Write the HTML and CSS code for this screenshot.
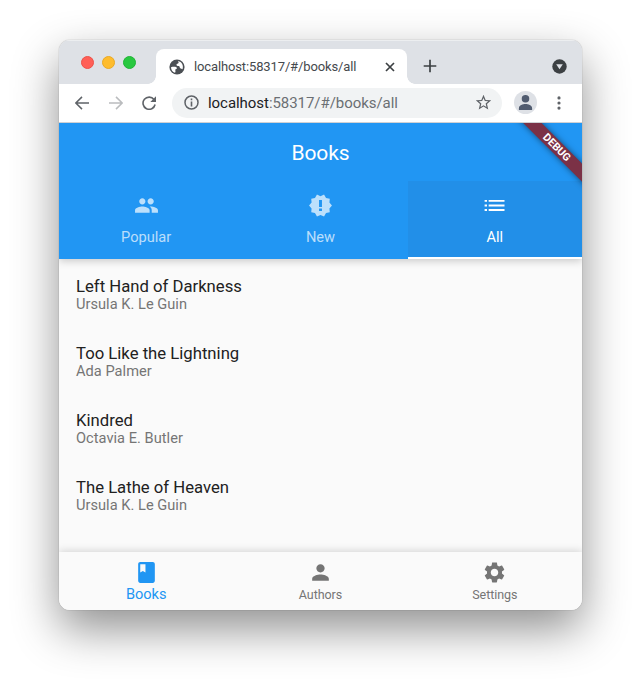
FILE: index.html
```html
<!DOCTYPE html>
<html lang="en">
<head>
<meta charset="utf-8">
<title>Books</title>
<link rel="stylesheet" href="styles.css">
</head>
<body>
<div class="window">
  <header class="tabstrip">
    <div class="lights"><i class="light red"></i><i class="light yellow"></i><i class="light green"></i></div>
    <div class="browser-tab">
      <svg class="globe" width="16" height="16" viewBox="0 0 16 16"><circle cx="8" cy="8" r="7.6" fill="#4b4f54"/><path d="M2 8.2C4 7.7 7.5 7.4 8 9c.3 1.2-1.8.6-1.7 2 .1.9.5 1.6-.3 2.8C3.5 13 2 10.800 2 8.200zM9 2c1.800.400 3.500 1.500 4.300 3.300.7 1.500.8 3.500.200 5-.7-.7-1.500-.4-2.300-1C10.500 8.600 11 7 9.600 7 8.500 7 7.300 6.700 7.500 5.500 7.700 4.500 9 4.800 9.500 4 9.900 3.300 9.200 2.600 9 2z" fill="#fff"/></svg>
      <span class="tab-title">localhost:58317/#/books/all</span>
      <svg class="close" width="10" height="10" viewBox="0 0 10 10"><path d="M1 1l8 8M9 1l-8 8" stroke="#3c4043" stroke-width="1.700"/></svg>
    </div>
    <svg class="plus" width="14" height="14" viewBox="0 0 14 14"><path d="M7 .7v12.600M.7 7h12.600" stroke="#3c4043" stroke-width="1.700"/></svg>
    <svg class="dropdown" width="15" height="15" viewBox="0 0 15 15"><circle cx="7.500" cy="7.500" r="7.200" fill="#3c4043"/><path d="M4.200 5.200h6.600L7.500 10.300z" fill="#dee1e6"/></svg>
  </header>
  <div class="toolbar">
    <svg class="back" width="14" height="14" viewBox="0 0 14 14"><path d="M14 7H1.200M7 .9L.9 7 7 13.100" fill="none" stroke="#5f6368" stroke-width="1.500"/></svg>
    <svg class="forward" width="14" height="14" viewBox="0 0 14 14"><path d="M0 7h12.800M7 .9L13.100 7 7 13.100" fill="none" stroke="#babcbe" stroke-width="1.500"/></svg>
    <svg class="reload" width="14" height="14" viewBox="0 0 14 14"><path d="M12 3.500A6.100 6.100 0 1 0 13.100 8.500" fill="none" stroke="#5f6368" stroke-width="1.600"/><path d="M14 .3V6H8.300z" fill="#5f6368"/></svg>
    <div class="address">
      <svg width="15" height="15" viewBox="0 0 15 15"><circle cx="7.500" cy="7.500" r="6.500" fill="none" stroke="#5f6368" stroke-width="1.500"/><path d="M7.500 3.500v1.700M7.500 6.500v5" stroke="#5f6368" stroke-width="1.600"/></svg>
      <span class="url"><b>localhost</b>:58317/#/books/all</span>
      <svg class="star" width="17" height="17" viewBox="1 1 22 22"><path fill="#5f6368" d="M22 9.240l-7.190-.62L12 2 9.190 8.630 2 9.240l5.460 4.730L5.820 21 12 17.270 18.180 21l-1.630-7.030L22 9.240zM12 15.400l-3.760 2.270 1-4.280-3.320-2.880 4.380-.38L12 6.100l1.710 4.040 4.380.38-3.320 2.880 1 4.280L12 15.400z"/></svg>
    </div>
    <div class="avatar"><svg width="17" height="17" viewBox="3 3 18 18"><path fill="#515c70" d="M12 12a4 4 0 1 0 0-8 4 4 0 0 0 0 8zm0 1.700c-2.670 0-7 1.340-7 4V20h14v-2.300c0-2.660-4.330-4-7-4z"/></svg></div>
    <svg class="more" width="4" height="14" viewBox="0 0 4 14"><path fill="#5f6368" d="M2 .3a1.600 1.600 0 1 1 0 3.200 1.600 1.600 0 0 1 0-3.200zm0 5.100a1.600 1.600 0 1 1 0 3.200 1.600 1.600 0 0 1 0-3.200zm0 5.100a1.600 1.600 0 1 1 0 3.200 1.600 1.600 0 0 1 0-3.200z"/></svg>
  </div>
  <main class="app">
    <header class="appbar">
      <h1>Books</h1>
      <nav class="tabs">
        <div class="tab"><svg viewBox="0 0 24 24"><path d="M16 11c1.660 0 2.990-1.340 2.990-3S17.660 5 16 5s-3 1.340-3 3 1.340 3 3 3zm-8 0c1.660 0 2.990-1.340 2.990-3S9.660 5 8 5 5 6.340 5 8s1.340 3 3 3zm0 2c-2.330 0-7 1.170-7 3.500V19h14v-2.500c0-2.330-4.670-3.500-7-3.500zm8 0c-.29 0-.62.020-.97.050 1.160.84 1.970 1.970 1.970 3.450V19h6v-2.500c0-2.330-4.670-3.500-7-3.500z"/></svg><span>Popular</span></div>
        <div class="tab"><svg viewBox="0 0 24 24"><path d="M23 12l-2.440-2.780.34-3.680-3.610-.82-1.890-3.180L12 3 8.600 1.540 6.710 4.720l-3.610.81.34 3.680L1 12l2.440 2.780-.34 3.690 3.610.82 1.890 3.180L12 21l3.400 1.460 1.890-3.180 3.610-.82-.34-3.680L23 12zm-9.600 5.200h-2.800v-2.300h2.800v2.300zm0-3.800h-2.800V6.600h2.800v6.800z"/></svg><span>New</span></div>
        <div class="tab selected"><svg viewBox="0 0 24 24"><path d="M2.500 6.600h2.300v1.900H2.500zM6.400 6.600h15.200v1.900H6.400zM2.500 11h2.300v1.900H2.500zM6.400 11h15.200v1.900H6.400zM2.500 15.400h2.300v1.900H2.500zM6.400 15.400h15.200v1.900H6.400z"/></svg><span>All</span></div>
      </nav>
    </header>
    <ul class="books">
      <li><h2>Left Hand of Darkness</h2><p>Ursula K. Le Guin</p></li>
      <li><h2>Too Like the Lightning</h2><p>Ada Palmer</p></li>
      <li><h2>Kindred</h2><p>Octavia E. Butler</p></li>
      <li><h2>The Lathe of Heaven</h2><p>Ursula K. Le Guin</p></li>
    </ul>
    <nav class="bottom">
      <div class="dest active"><svg viewBox="0 0 24 24"><path d="M18 2H6c-1.100 0-2 .9-2 2v16c0 1.100.9 2 2 2h12c1.100 0 2-.9 2-2V4c0-1.100-.9-2-2-2zM6 4h5v8l-2.500-1.500L6 12V4z"/></svg><span>Books</span></div>
      <div class="dest"><svg viewBox="0 0 24 24"><path d="M12 12c2.210 0 4-1.790 4-4s-1.790-4-4-4-4 1.790-4 4 1.790 4 4 4zm0 2c-2.670 0-8 1.340-8 4v2h16v-2c0-2.660-5.330-4-8-4z"/></svg><span>Authors</span></div>
      <div class="dest"><svg viewBox="0 0 24 24"><path d="M19.140 12.940c.04-.3.060-.61.060-.94 0-.32-.02-.64-.07-.94l2.030-1.580c.18-.14.23-.41.120-.61l-1.920-3.320c-.12-.22-.37-.29-.59-.22l-2.390.96c-.5-.38-1.030-.7-1.620-.94l-.36-2.540c-.04-.24-.24-.41-.48-.41h-3.840c-.24 0-.43.170-.47.410l-.36 2.540c-.59.240-1.130.57-1.620.94l-2.390-.96c-.22-.08-.47 0-.59.220L2.740 8.870c-.12.210-.08.470.120.610l2.030 1.580c-.05.300-.09.630-.09.940s.02.640.070.940l-2.030 1.580c-.18.140-.23.410-.12.610l1.920 3.320c.12.220.37.290.59.220l2.390-.96c.5.380 1.030.7 1.620.94l.36 2.540c.05.240.24.410.48.410h3.840c.24 0 .44-.17.470-.41l.36-2.540c.59-.24 1.130-.56 1.620-.94l2.390.96c.22.080.47 0 .59-.22l1.920-3.320c.12-.22.070-.47-.12-.61l-2.010-1.580zM12 15.600c-1.980 0-3.600-1.620-3.600-3.600s1.620-3.600 3.600-3.600 3.600 1.620 3.600 3.600-1.620 3.600-3.600 3.600z"/></svg><span>Settings</span></div>
    </nav>
    <div class="ribbon">DEBUG</div>
  </main>
</div>
</body>
</html>
```
FILE: styles.css
```css
* { box-sizing: border-box; margin: 0; padding: 0; }
body { background: #fff; font-family: Roboto, sans-serif; padding: 40px 0 0 59px; height: 687px; overflow: hidden; }
svg { display: block; flex: none; }
.window {
  width: 523px; height: 570px; border-radius: 11px; overflow: hidden;
  display: flex; flex-direction: column; background: #fff;
  box-shadow: 0 0 1px rgba(0,0,0,.5), 0 19px 46px rgba(0,0,0,.44);
}
.tabstrip { height: 44px; background: #dee1e6; display: flex; align-items: flex-end; box-shadow: inset 0 1px 0 #eceef0; flex: none; }
.lights { display: flex; gap: 8px; padding: 0 0 15px 22px; width: 97px; }
.light { width: 13px; height: 13px; border-radius: 50%; }
.red { background: #ff5f57; border: 1px solid #ed5048; }
.yellow { background: #febc2e; border: 1px solid #eaa923; }
.green { background: #28c840; border: 1px solid #20b436; }
.browser-tab {
  position: relative; width: 251px; height: 35px; background: #fff; border-radius: 8px 8px 0 0;
  display: flex; align-items: center; padding: 0 12px 0 13px; color: #45494d; font-size: 13px;
}
.browser-tab::before, .browser-tab::after { content: ""; position: absolute; bottom: 0; width: 8px; height: 8px; }
.browser-tab::before { left: -8px; background: radial-gradient(circle at 0 0, transparent 7.5px, #fff 8px); }
.browser-tab::after { right: -8px; background: radial-gradient(circle at 100% 0, transparent 7.5px, #fff 8px); }
.tab-title { margin-left: 9px; letter-spacing: -.13px; flex: 1; white-space: nowrap; }
.plus { margin: 0 0 11px 16px; }
.dropdown { margin: 0 15px 10px auto; }
.toolbar { height: 39px; flex: none; display: flex; align-items: center; padding: 0 21px 1px 16px; border-bottom: 1px solid #cfd1d4; }
.forward { margin-left: 20px; }
.reload { margin-left: 19px; }
.address { margin-left: 16px; width: 330px; height: 30px; border-radius: 15px; background: #f1f3f4; display: flex; align-items: center; padding: 0 10px 0 12px; }
.url { flex: 1; margin-left: 9px; font-size: 15px; letter-spacing: -.05px; color: #6b6f73; white-space: nowrap; }
.url b { font-weight: 400; color: #202124; }
.avatar { margin-left: 12px; width: 23px; height: 23px; border-radius: 50%; background: #dee1e6; display: flex; align-items: center; justify-content: center; }
.more { margin-left: auto; }
.app { position: relative; flex: 1; min-height: 0; display: flex; flex-direction: column; background: #fafafa; overflow: hidden; }
.appbar { height: 136px; flex: none; background: #2196f3; color: #fff; box-shadow: 0 2px 8px rgba(0,0,0,.2); z-index: 1; }
.appbar h1 { height: 58px; line-height: 61px; font-size: 21px; font-weight: 400; text-align: center; letter-spacing: -.15px; }
.tabs { display: grid; grid-template-columns: repeat(3, 1fr); height: 78px; }
.tab { display: flex; flex-direction: column; align-items: center; padding-top: 12px; font-size: 14.600px; color: rgba(255,255,255,.7); }
.tab svg { width: 25px; height: 25px; fill: currentColor; }
.tab span { margin-top: 11px; line-height: 17px; }
.selected { background: #228fe8; color: #fff; border-bottom: 2px solid #fff; }
.books { flex: 1; list-style: none; padding: 18px 17px 0; }
.books li { height: 67px; }
.books h2 { font-size: 16.700px; line-height: 20px; font-weight: 400; color: #212121; letter-spacing: 0; }
.books p { font-size: 14.600px; line-height: 17px; color: #757575; letter-spacing: .03px; margin-top: -1px; }
.bottom { height: 58px; flex: none; display: grid; grid-template-columns: repeat(3, 1fr); background: #fafafa; box-shadow: 0 -1px 8px rgba(0,0,0,.16); }
.dest { display: flex; flex-direction: column; align-items: center; padding-top: 8px; color: #757575; font-size: 12.500px; line-height: 17px; letter-spacing: -.05px; }
.dest svg { width: 25px; height: 25px; fill: currentColor; }
.dest span { margin-top: 1px; }
.active { color: #2196f3; font-size: 14.600px; }
.ribbon {
  position: absolute; z-index: 2; left: 438px; top: 18px; width: 120px; height: 12.500px;
  transform: rotate(45deg); background: #7b3146; color: #fff; text-align: center;
  font-size: 10.700px; line-height: 13px; font-weight: 700; box-shadow: 0 0 6px rgba(0,0,0,.5);
}
```
